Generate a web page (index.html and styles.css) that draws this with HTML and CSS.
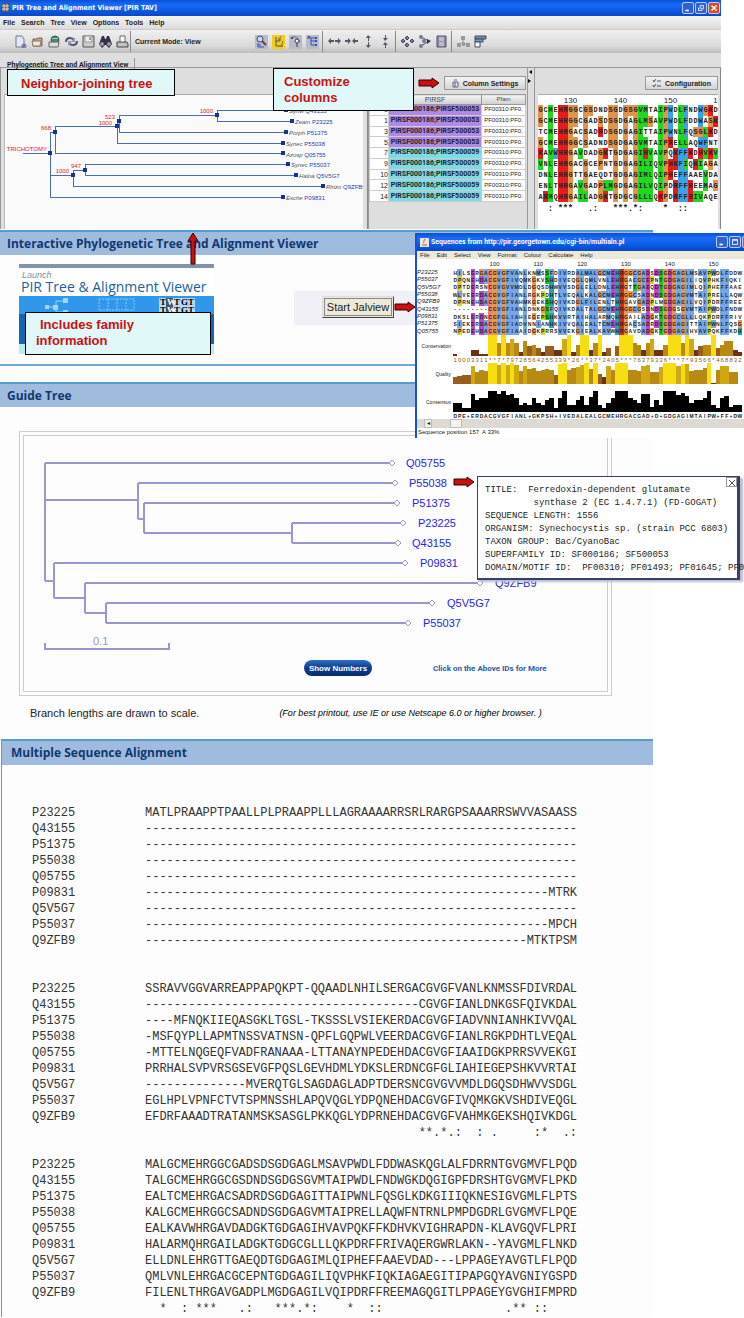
FILE: index.html
```html
<!DOCTYPE html>
<html lang="en">
<head>
<meta charset="utf-8">
<title>PIR Tree and Alignment Viewer</title>
<link rel="stylesheet" href="styles.css">
</head>
<body>
<main class="collage">

<section class="app">
  <header class="titlebar">
    <svg class="app-icon" viewBox="0 0 9 9"><rect width="9" height="9" fill="#555"/><path d="M1 3h7M1 6h7M3 1v7M6 1v7" stroke="#ddd"/></svg>
    <span class="title-text">PIR Tree and Alignment Viewer [PIR TAV]</span>
    <button class="win-btn" aria-label="Minimize"><svg viewBox="0 0 12 12"><path d="M3 9h4" stroke="#fff" stroke-width="2"/></svg></button>
    <button class="win-btn" aria-label="Restore"><svg viewBox="0 0 12 12"><path d="M3 6h4v3H3zM5 5V3h4v4H8" fill="none" stroke="#fff"/></svg></button>
    <button class="win-btn win-close" aria-label="Close"><svg viewBox="0 0 12 12"><path d="M3 3l6 6M9 3l-6 6" stroke="#fff" stroke-width="2"/></svg></button>
  </header>
  <nav class="menubar">
    <button>File</button><button>Search</button><button>Tree</button><button>View</button><button>Options</button><button>Tools</button><button>Help</button>
  </nav>
  <div class="toolbar">
    <div class="tools">
      <button aria-label="New"><svg viewBox="0 0 13 13"><path d="M2 1h6l2 3v8H2z" fill="#e4e6f4" stroke="#778"/><path d="M10 8v5M7 11h6M8 9l4 4M12 9l-4 4" stroke="#66699a"/></svg></button>
      <button aria-label="Open"><svg viewBox="0 0 13 13"><path d="M2 11V4h4l1-1h4v8z" fill="#c9a58a" stroke="#765"/><path d="M1 6h9l-1 5H2z" fill="#f1e6da" stroke="#876"/></svg></button>
      <button aria-label="Open from web"><svg viewBox="0 0 13 13"><circle cx="7" cy="5" r="4" fill="#3f8c62" stroke="#355"/><path d="M4 4c2-2 3 1 6-1" stroke="#bde" fill="none"/><path d="M1 7h10l-1 5H1z" fill="#ddd" stroke="#666"/></svg></button>
      <button aria-label="Refresh"><svg viewBox="0 0 13 13"><path d="M1 7c0-5 6-5 8-2M12 6c0 5-6 5-8 2" fill="none" stroke="#557" stroke-width="2"/><path d="M10 2v5H6zM3 11V6h4z" fill="#99b"/></svg></button>
      <button aria-label="Save"><svg viewBox="0 0 13 13"><path d="M1 1h11v11H1z" fill="#ccc" stroke="#555"/><path d="M3 1h7v6H3z" fill="#eee" stroke="#999"/><path d="M8 2v3" stroke="#555"/></svg></button>
      <button aria-label="Find"><svg viewBox="0 0 13 13"><path d="M3 1h2l1 3h1l1-3h2l3 8-3 4-3-3H6l-3 3-3-4z" fill="#334"/><circle cx="3" cy="9" r="2" fill="#99a"/><circle cx="10" cy="9" r="2" fill="#99a"/></svg></button>
      <button aria-label="Print"><svg viewBox="0 0 13 13"><path d="M4 7V1h5v6" fill="#fff" stroke="#667"/><path d="M1 7h10l1 2v3H1z" fill="#bbc" stroke="#445"/><path d="M3 10h6" stroke="#dd5"/></svg></button>
    </div>
    <span class="mode">Current Mode: View</span>
    <div class="tools tools-mode">
      <button aria-label="Zoom mode" class="on"><svg viewBox="0 0 13 13"><circle cx="5" cy="4" r="3" fill="#bdf" stroke="#447"/><path d="M7 6l4 4" stroke="#643" stroke-width="2"/><path d="M3 8v4h6M3 10h3" stroke="#35b" fill="none"/></svg></button>
      <button aria-label="Select mode" class="on active"><svg viewBox="0 0 13 13"><path d="M4 2v9h7M4 6h4M8 3v3" stroke="#456" fill="none"/><path d="M9 1l-3 4M11 6l-2 6" stroke="#a60"/></svg></button>
      <button aria-label="Swap mode" class="on"><svg viewBox="0 0 13 13"><path d="M2 4c2-4 7-2 9 3" stroke="#667" fill="none"/><circle cx="3" cy="3" r="1" fill="#336"/><circle cx="8" cy="6" r="2" fill="#fff" stroke="#336"/><path d="M8 8v4" stroke="#336"/></svg></button>
      <button aria-label="Tree mode" class="on"><svg viewBox="0 0 13 13"><path d="M1 3h4v3h6M5 6v4h6M5 3h5" stroke="#35b" fill="none"/><path d="M2 1h2v2H2zM9 2h2v2H9zM9 5h2v2H9zM9 9h2v2H9z" fill="#35b"/></svg></button>
    </div>
    <div class="tools tools-size">
      <button aria-label="Narrow"><svg viewBox="0 0 13 13"><path d="M0 6l3-3v2h3v2H3v2zM13 6l-3-3v2H7v2h3v2z" fill="#556"/></svg></button>
      <button aria-label="Widen"><svg viewBox="0 0 13 13"><path d="M6 6L3 3v2H0v2h3v2zM7 6l3-3v2h3v2h-3v2z" fill="#556"/></svg></button>
      <button aria-label="Taller"><svg viewBox="0 0 13 13"><path d="M6 0L4 3h2v3h1V3h2zM6 13l-2-3h2V7h1v3h2z" fill="#556"/></svg></button>
      <button aria-label="Shorter"><svg viewBox="0 0 13 13"><path d="M6 6L4 3h2V0h1v3h2zM6 7l-2 3h2v3h1v-3h2z" fill="#556"/></svg></button>
    </div>
    <div class="tools tools-view">
      <button aria-label="Fit"><svg viewBox="0 0 13 13"><path d="M6 1l2 2-2 2-2-2zM6 8l2 2-2 2-2-2zM2 4l2 2-2 2-2-2zM11 4l2 2-2 2-2-2z" fill="#779" stroke="#445"/></svg></button>
      <button aria-label="Collapse"><svg viewBox="0 0 13 13"><path d="M3 2l8 4-8 5" stroke="#556" fill="none"/><circle cx="3" cy="2" r="2" fill="#779"/><circle cx="3" cy="11" r="2" fill="#779"/><circle cx="6" cy="6" r="2" fill="#779"/><path d="M9 4l4 2-4 3z" fill="#334"/></svg></button>
      <button aria-label="Columns"><svg viewBox="0 0 13 13"><path d="M2 1h9v11H2z" fill="#99a" stroke="#557"/><path d="M4 3h5M4 5h5M4 8h5M4 10h5" stroke="#dde"/><path d="M3 1v11M10 1v11" stroke="#557" stroke-dasharray="1 1"/></svg></button>
    </div>
    <div class="tools tools-view">
      <button aria-label="Hierarchy"><svg viewBox="0 0 13 13"><path d="M6 3v4M2 10l4-3 5 3" stroke="#999" fill="none"/><path d="M4 1h4v4H4zM0 8h4v4H0zM9 8h4v4H9zM5 8h3v3H5z" fill="#999"/></svg></button>
      <button aria-label="Chart"><svg viewBox="0 0 13 13"><path d="M1 1h11v3H1z" fill="#88a" stroke="#446"/><path d="M1 4h8v3H1z" fill="#5ac" stroke="#446"/><path d="M1 7h5v5H1z" fill="#fff" stroke="#446"/></svg></button>
    </div>
  </div>
  <div class="tabs"><button>Phylogenetic Tree and Alignment View</button></div>
  <div class="panes">
    <div class="pane pane-tree">
      <div class="canvas">
      <svg class="nj" width="359" height="134" viewBox="5 95 359 134">
        <g class="nj-lines">
          <path d="M23 153H50M50 132V197M50 132H55M55 126V153M55 126H117M117 121V143M119 115V132M117 121H119M119 115H217M217 110V121M217 110H286M217 121H292M119 132H286M117 143H283M55 153H283M50 175H73M73 170V186M73 170H85M85 164V175M85 164H288M85 175H296M73 186H322M50 197H283"/>
        </g>
        <path class="nj-nodes" d="M48 151h4v4h-4zM53 130h4v4h-4zM115 124h4v4h-4zM117 119h4v4h-4zM215 113h4v4h-4zM284 108h4v4h-4zM290 119h4v4h-4zM284 130h4v4h-4zM281 141h4v4h-4zM281 151h4v4h-4zM71 173h4v4h-4zM83 168h4v4h-4zM286 162h4v4h-4zM294 173h4v4h-4zM321 184h4v4h-4zM281 195h4v4h-4z"/>
        <g class="nj-boot">
          <text x="51" y="130">668</text><text x="115" y="119">523</text><text x="112" y="125">1000</text><text x="213" y="113">1000</text><text x="81" y="168">947</text><text x="69" y="173">1000</text><text x="47" y="151">TRICHOTOMY</text>
        </g>
        <g class="nj-names">
          <text x="289" y="113"><tspan class="genus">Synw</tspan> Q43155</text>
          <text x="295" y="124"><tspan class="genus">Zeam</tspan> P23225</text>
          <text x="289" y="135"><tspan class="genus">Porph</tspan> P51375</text>
          <text x="286" y="146"><tspan class="genus">Synec</tspan> P55038</text>
          <text x="286" y="157"><tspan class="genus">Azosp</tspan> Q05755</text>
          <text x="291" y="167"><tspan class="genus">Synec</tspan> P55037</text>
          <text x="299" y="178"><tspan class="genus">Haloa</tspan> Q5V5G7</text>
          <text x="326" y="189"><tspan class="genus">Rhizo</tspan> Q9ZFB9</text>
          <text x="286" y="200"><tspan class="genus">Esche</tspan> P09831</text>
        </g>
      </svg>
      </div>
    </div>
    <div class="pane pane-table">
      <button class="swing"><svg width="7" height="9" viewBox="0 0 7 9"><path d="M1 3h5v5H1zM3 3v5M2 1h3" fill="#dde" stroke="#668"/></svg>Column Settings</button>
      <table class="fam">
        <thead><tr><th class="c-no"></th><th>PIRSF</th><th class="c-pf">Pfam</th></tr></thead>
        <tbody id="fam-rows"></tbody>
      </table>
    </div>
    <div class="splitter"><svg width="4" height="14" viewBox="0 0 4 14"><path d="M4 0v4L1 2zM0 9v4l3-2z"/></svg></div>
    <div class="pane pane-seq">
      <button class="swing"><svg width="9" height="9" viewBox="0 0 9 9"><path d="M1 1l1 2 2-3M1 6l1 2 2-3M5 2h4M5 7h4" fill="none" stroke="#555"/></svg>Configuration</button>
      <div class="canvas"><div class="seq-top" id="seq-top"></div></div>
    </div>
  </div>
</section>

<div class="page">
  <section class="sec sec-launch">
    <h2>Interactive Phylogenetic Tree and Alignment Viewer</h2>
    <div class="launch-row">
      <a class="banner" href="#viewer">
        <span class="b-small">Launch</span>
        <span class="b-big">PIR Tree &amp; Alignment Viewer</span>
        <span class="b-art">
          <svg width="195" height="18" viewBox="0 0 195 18">
            <path d="M28 11h6M37 11V5h8M37 11v5h8" fill="none" stroke="#9cd0f8"/><path d="M26 9h4v4h-4zM44 2h5v5h-5zM34 9h5v5h-5zM44 14h5v4h-5z" fill="#a8d4f8"/>
            <path d="M80 3h35v11H80zM89 3v11M98 3v11M107 3v11" fill="none" stroke="#8cc6f6" stroke-dasharray="2 1"/>
            <path d="M140 2h36v16h-36z" fill="#b8d8f0"/><path d="M147 2h7v16h-7z" fill="#456"/>
            <g class="b-code"><text x="141" y="9">T</text><text x="148" y="9" fill="#fff">W</text><text x="155" y="9">T</text><text x="162" y="9">G</text><text x="169" y="9">T</text><text x="141" y="17">T</text><text x="148" y="17" fill="#fff">W</text><text x="155" y="17">T</text><text x="162" y="17">G</text><text x="169" y="17">T</text></g>
          </svg>
        </span>
        <span class="b-dark"></span>
        <span class="b-foot"></span>
      </a>
      <div class="jal-strip"><button class="jal-btn">Start Jalview</button></div>
    </div>
  </section>

  <section class="sec sec-guide">
    <h2>Guide Tree</h2>
    <div class="frame"><div class="frame-in">
      <svg class="guide" width="584" height="225" viewBox="24 435 584 225">
        <path class="g-lines" d="M45 462V580M45 462H389M45 499H138M138 482V518M138 482H392M138 518H144M144 502V532M144 502H394M144 532H292M292 522V542M292 522H401M292 542H395M45 580H54M54 562V597M54 562H403M54 597H85M85 582V612M85 582H478M85 612H106M106 602V622M106 602H430M106 622H406M45 642V648M169 642V648M44 648H170"/>
        <path class="g-tips" d="M389 462l3-3 3 3-3 3zM392 482l3-3 3 3-3 3zM394 502l3-3 3 3-3 3zM400 522l3-3 3 3-3 3zM395 542l3-3 3 3-3 3zM402 562l3-3 3 3-3 3zM477 582l3-3 3 3-3 3zM429 602l3-3 3 3-3 3zM405 622l3-3 3 3-3 3z"/>
        <text class="g-scale" x="93" y="644">0.1</text>
        <g class="g-ids">
          <a href="#Q05755"><text x="406" y="466">Q05755</text></a>
          <a href="#P55038"><text x="409" y="486">P55038</text></a>
          <a href="#P51375"><text x="412" y="506">P51375</text></a>
          <a href="#P23225"><text x="418" y="526">P23225</text></a>
          <a href="#Q43155"><text x="412" y="546">Q43155</text></a>
          <a href="#P09831"><text x="420" y="566">P09831</text></a>
          <a href="#Q9ZFB9"><text x="495" y="586">Q9ZFB9</text></a>
          <a href="#Q5V5G7"><text x="447" y="606">Q5V5G7</text></a>
          <a href="#P55037"><text x="423" y="626">P55037</text></a>
        </g>
      </svg>
      <div class="guide-foot"><button class="pill">Show Numbers</button><span>Click on the Above IDs for More</span></div>
    </div></div>
    <p class="note"><span>Branch lengths are drawn to scale.</span><em>(For best printout, use IE or use Netscape 6.0 or higher browser. )</em></p>
  </section>

  <section class="sec sec-msa">
    <h2>Multiple Sequence Alignment</h2>
    <div id="msa"></div>
  </section>
</div>

<section class="jalview">
  <header class="titlebar">
    <svg class="app-icon" viewBox="0 0 9 9"><rect width="9" height="9" fill="#e8e4e0"/><path d="M2 7h5M3 5c2-1 0-2 2-4" fill="none" stroke="#b54"/></svg>
    <span class="title-text">Sequences from http://pir.georgetown.edu/cgi-bin/multialn.pl</span>
    <button class="win-btn" aria-label="Minimize"><svg viewBox="0 0 12 12"><path d="M3 9h4" stroke="#fff" stroke-width="2"/></svg></button>
    <button class="win-btn" aria-label="Maximize"><svg viewBox="0 0 12 12"><path d="M3 3h6v6H3zM3 4h6" fill="none" stroke="#fff"/></svg></button>
    <button class="win-btn win-close" aria-label="Close"><svg viewBox="0 0 12 12"><path d="M3 3l6 6M9 3l-6 6" stroke="#fff" stroke-width="2"/></svg></button>
  </header>
  <nav class="menubar">
    <button>File</button><button>Edit</button><button>Select</button><button>View</button><button>Format</button><button>Colour</button><button>Calculate</button><button>Help</button>
  </nav>
  <div class="jal-grid" id="jal-grid"></div>
  <div class="scroll"><button aria-label="Scroll left">◂</button><i></i></div>
  <footer class="status">Sequence position 157&nbsp; A 33%</footer>
</section>

<aside class="popup">
  <button aria-label="Close"><svg width="10" height="10" viewBox="0 0 10 10"><path d="M2 2l6 6M8 2l-6 6" stroke="#555"/></svg></button>
  <pre>TITLE:  Ferredoxin-dependent glutamate
         synthase 2 (EC 1.4.7.1) (FD-GOGAT)
SEQUENCE LENGTH: 1556
ORGANISM: Synechocystis sp. (strain PCC 6803)
TAXON GROUP: Bac/CyanoBac
SUPERFAMILY ID: SF000186; SF500053
DOMAIN/MOTIF ID:  PF00310; PF01493; PF01645; PF04898</pre>
</aside>

<div class="callout callout-nj">Neighbor-joining tree</div>
<div class="callout callout-cols">Customize<br>columns</div>
<div class="callout callout-fam">Includes family information</div>

<svg class="arrow arrow-cols" width="22" height="12" viewBox="0 0 22 12"><path d="M1 3h13V1l7 5-7 5V9H1z"/></svg>
<svg class="arrow arrow-jal" width="22" height="12" viewBox="0 0 22 12"><path d="M1 3h13V1l7 5-7 5V9H1z"/></svg>
<svg class="arrow arrow-pop" width="22" height="12" viewBox="0 0 22 12"><path d="M1 3h13V1l7 5-7 5V9H1z"/></svg>
<svg class="arrow arrow-up" width="12" height="33" viewBox="0 0 12 33"><path d="M4 32V9H1l5-8 5 8H8v23z"/></svg>
</main>
<script src="render.js"></script>
</body>
</html>
```

FILE: styles.css
```css
* { box-sizing: border-box; }
body { margin: 0; background: #fff; font-family: "Liberation Sans", Arial, sans-serif; color: #222; }
button { font: inherit; color: inherit; margin: 0; padding: 0; border: 0; background: none; white-space: nowrap; }
svg { display: block; flex: none; }
.collage { position: relative; overflow: hidden; }

/* application window */
.app { margin-right: 23px; height: 229px; display: flex; flex-direction: column; background: #dedede; }
.titlebar { display: flex; align-items: center; gap: 1px; height: 16px; padding: 0 1px; background: linear-gradient(#0a50d8, #1a6cf8 30%, #0a58e0 70%, #0848c8); color: #fff; font-family: "DejaVu Sans Condensed", sans-serif; font-size: 7px; font-weight: bold; }
.app-icon { width: 9px; height: 9px; }
.title-text { flex: 1; padding-left: 1px; white-space: nowrap; }
.win-btn { width: 12px; height: 12px; border: 1px solid #b8ccf4; border-radius: 2px; background: #2f62d8; }
.win-btn svg { width: 10px; height: 10px; }
.win-close { background: #dc4a24; }
.menubar { display: flex; align-items: center; font-size: 7px; }
.app .menubar { height: 14px; gap: 6px; padding-left: 3px; font-weight: bold; background: linear-gradient(#f4f4f4, #dcdcdc); }
.toolbar { display: flex; align-items: center; height: 24px; padding-left: 14px; background: linear-gradient(#f0f0f0, #dadada 70%, #bcbcbc); border-top: 1px solid #ccc; }
.tools { display: flex; gap: 4px; height: 21px; align-items: center; }
.tools button { width: 13px; height: 14px; }
.tools svg { width: 13px; height: 13px; }
.tools .on { background: #b9bcc4; }
.tools .active { background: #f4cc20; }
.mode { flex: 0 0 125px; margin-left: 1px; padding-left: 4px; height: 21px; line-height: 21px; border-left: 1px solid #888; font-size: 7px; font-weight: bold; }
.tools-size, .tools-view { margin-left: 3px; padding-left: 5px; border-left: 1px solid #888; }
.tabs { height: 15px; border-bottom: 1px solid #999; }
.tabs button { height: 14px; padding: 0 6px 0 7px; font-family: Roboto, sans-serif; font-size: 7px; font-weight: bold; border-right: 1px solid #999; }
.panes { flex: 1; display: grid; grid-template-columns: 368fr 159fr 7px 187fr; }
.pane { display: flex; flex-direction: column; min-width: 0; overflow: hidden; border-left: 1px solid #999; }
.canvas { flex: 1; background: #fbfbfb; overflow: hidden; border-top: 1px solid #aaa; border-left: 1px solid #bbb; }
.pane-tree { padding: 26px 4px 0 3px; border-right: 1px solid #888; }
.nj-lines { fill: none; stroke: #4a6cb8; stroke-width: 1; shape-rendering: crispEdges; }
.nj-nodes { fill: #12349a; }
.nj text { font-size: 6px; }
.nj-boot { fill: #e02020; text-anchor: end; }
.nj-names { fill: #1c3ca8; }
.genus { fill: #555; font-style: italic; }
.swing { display: flex; align-items: center; justify-content: center; gap: 4px; height: 14px; align-self: flex-end; border: 1px solid #999; background: linear-gradient(#f4f4f4, #d4d4d4); font-size: 7px; font-weight: bold; }
.pane-table { padding-top: 8px; padding-right: 1px; }
.pane-table .swing { width: 82px; margin-bottom: 4px; }
.fam { width: 100%; height: 108px; border-collapse: collapse; table-layout: fixed; background: #fff; font-size: 7px; line-height: 9px; }
.fam th, .fam td { padding: 0; border: 1px solid #ccc; white-space: nowrap; overflow: hidden; text-align: center; }
.fam th { background: linear-gradient(#f4f4f4, #cfcfcf); border-color: #999; font-weight: normal; color: #444; }
.fam .c-no { width: 19px; text-align: right; }
.fam .c-pf { width: 44px; font-size: 6px; }
.fam .a { background: #b088e6; font-family: Roboto, sans-serif; font-weight: bold; }
.fam .b { background: #7edbe6; font-family: Roboto, sans-serif; font-weight: bold; }
.splitter { padding-top: 2px; border-left: 1px solid #999; }
.pane-seq { padding: 8px 2px 0 3px; border-right: 1px solid #888; }
.pane-seq .swing { width: 73px; margin-bottom: 4px; }
.pane-seq .canvas { background: #fff; border-left: 0; }
.seq-top { font-family: "Liberation Mono", monospace; font-size: 7px; font-weight: bold; }
.cells { display: grid; overflow: visible; }
.cells > * { display: flex; align-items: center; justify-content: center; min-width: 0; white-space: pre; }
.seq-top .cells { grid-template-columns: repeat(36, minmax(0, 1fr)); }
.seq-top .ruler { height: 10px; font-family: "Liberation Sans", sans-serif; font-size: 8px; font-weight: normal; }
.seq-top .rows { height: 97px; grid-auto-rows: minmax(0, 1fr); }
.seq-top .cons { height: 13px; font-size: 9px; }
.t-green { background: #1fd81f; }
.t-red { background: #e41c1c; }
.t-orange { background: #e2944a; }
.t-blue { background: #35a4ea; }

/* result page */
.page { margin-right: 91px; padding-top: 1px; background: #fdfdfd; }
.sec h2 { margin: 0; padding-left: 7px; height: 25px; line-height: 23px; border-top: 2px solid #559dcd; background: #9fbbde; color: #12386f; font-family: "Open Sans", sans-serif; font-size: 12px; font-weight: bold; white-space: nowrap; }
.launch-row { display: flex; align-items: flex-start; justify-content: space-between; height: 111px; padding: 9px 169px 0 19px; border-bottom: 2px solid #6ea9d2; }
.banner { display: flex; flex-direction: column; width: 195px; height: 90px; border-top: 4px solid #8494a8; background: #fff; color: #1c609e; text-decoration: none; white-space: nowrap; }
.b-small { padding: 1px 0 0 3px; height: 11px; font-size: 9px; line-height: 12px; font-style: italic; color: #8090a4; }
.b-big { padding-left: 2px; height: 17px; line-height: 15px; font-family: "Open Sans", sans-serif; font-size: 14px; }
.b-art { height: 18px; background: #3098ec; }
.b-code { font-family: "Liberation Serif", serif; font-size: 9px; font-weight: bold; }
.b-dark { flex: 1; background: #1266b4; }
.b-foot { height: 10px; background: #b4ecf8; }
.jal-strip { width: 190px; height: 34px; margin-top: 27px; padding: 5px 0 0 28px; background: #f0f0f6; }
.jal-btn { width: 72px; height: 22px; border: 1px solid #555; border-color: #ddd #444 #444 #ddd; outline: 1px solid #888; outline-offset: -3px; background: #ece9d8; font-size: 11px; }
.sec-guide { margin-top: 16px; }
.frame { margin: 24px 41px 0 19px; padding: 3px; border: 1px solid #ccc; }
.frame-in { height: 257px; border: 1px solid #ccc; overflow: hidden; }
.g-lines { fill: none; stroke: #9898d0; stroke-width: 2; shape-rendering: crispEdges; }
.g-tips { fill: #fff; stroke: #9898d0; }
.g-scale { fill: #9494cc; font-size: 11px; }
.g-ids { fill: #2424e4; font-size: 11px; }
.guide-foot { display: flex; align-items: center; gap: 61px; height: 14px; padding-left: 280px; }
.pill { width: 68px; height: 16px; border-radius: 8px; background: linear-gradient(#3070c0, #0c3c94 50%, #082c70); color: #fff; font-size: 8px; font-weight: bold; }
.guide-foot span { color: #2a5cac; font-size: 8px; font-weight: bold; white-space: nowrap; font-family: Roboto, sans-serif; }
.note { display: flex; align-items: center; gap: 80px; height: 43px; margin: 0; padding: 0 0 10px 30px; font-size: 11px; white-space: nowrap; color: #222; }
.note em { font-size: 9px; color: #000; }
.sec-msa { margin-left: 1px; border-left: 1px solid #559dcd; }
.sec-msa h2 { height: 26px; padding-left: 9px; }
#msa { padding-top: 40px; }
.block { margin-bottom: 16px; border-collapse: collapse; font-family: "Liberation Mono", monospace; font-size: 12px; line-height: 16px; color: #333; }
.block:last-child { margin-bottom: 0; }
.block th, .block td { padding: 0; height: 16px; font-weight: normal; text-align: left; white-space: pre; }
.block th { width: 143px; padding-left: 30px; }

/* Jalview window */
.jalview { position: absolute; left: 415px; right: -11px; top: 233px; height: 205px; display: flex; flex-direction: column; border-left: 2px solid #1450dc; background: #fff; }
.jalview .titlebar { height: 18px; padding: 0 1px 0 3px; font-family: Roboto, sans-serif; }
.jalview .menubar { height: 8px; gap: 7px; padding-left: 3px; background: #ece9d8; font-size: 6px; }
.jal-grid { flex: 1; display: grid; grid-template-columns: 36px 1fr; grid-template-rows: 10px 66px 21px 7px 21px 7px 21px 7px; padding-right: 13px; font-size: 5px; font-weight: bold; }
.jal-grid .cells { grid-template-columns: repeat(66, minmax(0, 1fr)); }
.jal-grid .rows { grid-auto-rows: minmax(0, 1fr); }
.jal-grid .ruler { font-size: 6px; font-weight: normal; }
.jal-grid svg { width: 100%; height: 100%; }
.jal-grid .digits { font-size: 6px; color: #8a5a20; font-weight: normal; }
.ids { display: grid; grid-auto-rows: minmax(0, 1fr); align-items: center; font-size: 6px; font-style: italic; font-weight: normal; line-height: 7px; }
.row-name { align-self: center; justify-self: end; padding-right: 2px; font-size: 5px; font-weight: normal; }
.gap-row { grid-column: 1 / -1; }
.j-blue { background: #74a6e8; }
.j-mag { background: #c048c8; }
.j-orange { background: #e89850; }
.j-pink { background: #e88080; }
.j-red { background: #e02818; }
.j-green { background: #22c822; }
.j-cyan { background: #1ca8a8; }
.j-yellow { background: #d8d820; }
.scroll { display: flex; gap: 18px; height: 9px; padding-left: 7px; background: #dcdad2; }
.scroll button { width: 8px; height: 9px; border: 1px solid #bbb; background: #f0eee6; font-size: 6px; line-height: 7px; }
.scroll i { width: 12px; background: #f4f2ea; border: 1px solid #bbb; }
.status { height: 10px; padding-left: 1px; font-size: 6px; line-height: 9px; }

/* family details popup */
.popup { position: absolute; left: 477px; top: 476px; width: 263px; height: 104px; padding: 7px 0 0 7px; background: #fff; border: 1px solid #34406e; border-width: 1px 3px 2px 1px; box-shadow: 3px 2px 2px #bbc; }
.popup pre { margin: 0; font-family: "Liberation Mono", monospace; font-size: 9px; line-height: 13px; color: #222; }
.popup button { position: absolute; right: 0; top: 0; width: 11px; height: 10px; border: 1px solid #999; }

/* annotations */
.callout { position: absolute; border: 1px solid #000; background: #e0f8f8; color: #cc1010; font-size: 13px; font-weight: bold; line-height: 16px; }
.callout-nj { left: 7px; top: 69px; width: 168px; height: 27px; padding: 6px 0 0 13px; }
.callout-cols { left: 273px; top: 68px; width: 141px; height: 43px; padding: 5px 0 0 10px; }
.callout-fam { left: 25px; top: 312px; width: 186px; height: 43px; padding: 4px 40px 0 10px; text-indent: 4px; }
.arrow { position: absolute; fill: #cc1010; stroke: #300; }
.arrow-cols { left: 418px; top: 77px; }
.arrow-jal { left: 394px; top: 301px; }
.arrow-pop { left: 453px; top: 476px; }
.arrow-up { left: 187px; top: 232px; }
```

FILE: render.js
```javascript
const IDS = ['P23225', 'Q43155', 'P51375', 'P55038', 'Q05755', 'P09831', 'Q5V5G7', 'P55037', 'Q9ZFB9'];
const dash = n => '-'.repeat(n);
const BLOCKS = [
  {
    seqs: [
      'MATLPRAAPPTPAALLPLPRAAPPLLLAGRAAAARRSRLRARGPSAAARRSWVVASAASS',
      dash(60), dash(60), dash(60), dash(60), dash(56) + 'MTRK', dash(60), dash(56) + 'MPCH', dash(53) + 'MTKTPSM'
    ],
    cons: ' '
  },
  {
    seqs: [
      'SSRAVVGGVARREAPPAPQKPT-QQAADLNHILSERGACGVGFVANLKNMSSFDIVRDAL',
      dash(38) + 'CGVGFIANLDNKGSFQIVKDAL',
      '----MFNQKIIEQASGKLTGSL-TKSSSLVSIEKERDACGVGFIADVNNIANHKIVVQAL',
      '-MSFQYPLLAPMTNSSVATNSN-QPFLGQPWLVEERDACGVGFIANLRGKPDHTLVEQAL',
      '-MTTELNQGEQFVADFRANAAA-LTTANAYNPEDEHDACGVGFIAAIDGKPRRSVVEKGI',
      'PRRHALSVPVRSGSEVGFPQSLGEVHDMLYDKSLERDNCGFGLIAHIEGEPSHKVVRTAI',
      dash(14) + 'MVERQTGLSAGDAGLADPTDERSNCGVGVVMDLDGQSDHWVVSDGL',
      'EGLHPLVPNFCTVTSPMNSSHLAPQVQGLYDPQNEHDACGVGFIVQMKGKVSHDIVEQGL',
      'EFDRFAAADTRATANMSKSASGLPKKQGLYDPRNEHDACGVGFVAHMKGEKSHQIVKDGL'
    ],
    cons: ' '.repeat(38) + '**.*.:  : .     :*  .:'
  },
  {
    seqs: [
      'MALGCMEHRGGCGADSDSGDGAGLMSAVPWDLFDDWASKQGLALFDRRNTGVGMVFLPQD',
      'TALGCMEHRGGCGSDNDSGDGSGVMTAIPWDLFNDWGKDQGIGPFDRSHTGVGMVFLPKD',
      'EALTCMEHRGACSADRDSGDGAGITTAIPWNLFQSGLKDKGIIIQKNESIGVGMLFLPTS',
      'KALGCMEHRGGCSADNDSGDGAGVMTAIPRELLAQWFNTRNLPMPDGDRLGVGMVFLPQE',
      'EALKAVWHRGAVDADGKTGDGAGIHVAVPQKFFKDHVKVIGHRAPDN-KLAVGQVFLPRI',
      'HALARMQHRGAILADGKTGDGCGLLLQKPDRFFRIVAQERGWRLAKN--YAVGMLFLNKD',
      'ELLDNLEHRGTTGAEQDTGDGAGIMLQIPHEFFAAEVDAD---LPPAGEYAVGTLFLPQD',
      'QMLVNLEHRGACGCEPNTGDGAGILIQVPHKFIQKIAGAEGITIPAPGQYAVGNIYGSPD',
      'FILENLTHRGAVGADPLMGDGAGILVQIPDRFFREEMAGQGITLPPAGEYGVGHIFMPRD'
    ],
    cons: '  *  : ***   .:   ***.*:    *  ::' + ' '.repeat(17) + '.** ::'
  }
];
const seq = (b, id) => BLOCKS[b].seqs[IDS.indexOf(id)];
const cell = (ch, cls) => `<span${cls ? ` class="${cls}"` : ''}>${ch}</span>`;

/* plain alignment blocks */
document.getElementById('msa').innerHTML = BLOCKS.map(b =>
  '<table class="block">' + b.seqs.map((s, i) => `<tr><th>${IDS[i]}</th><td>${s}</td></tr>`).join('') +
  `<tr><th></th><td>${b.cons}</td></tr></table>`).join('');

/* family table */
document.getElementById('fam-rows').innerHTML = [0, 1, 3, 5, 7, 9, 10, 12, 14].map((n, i) =>
  `<tr><td class="c-no">${n}</td><td class="${i < 4 ? 'a' : 'b'}">PIRSF000186;PIRSF5000${i < 4 ? 53 : 59}</td><td class="c-pf">PF00310:PF0.</td></tr>`).join('');

/* coloured alignment next to the table */
const topClass = ch => 'MVIL'.includes(ch) ? 't-green' : 'HRK'.includes(ch) ? 't-red' : 'GSP'.includes(ch) ? 't-orange' : 'FW'.includes(ch) ? 't-blue' : '';
const topIds = ['Q43155', 'P23225', 'P51375', 'P55038', 'Q05755', 'P55037', 'Q5V5G7', 'Q9ZFB9', 'P09831'];
document.getElementById('seq-top').innerHTML =
  '<div class="cells ruler">' + [[130, 6], [140, 16], [150, 26]].map(([n, k]) => `<span style="grid-column:${k - 1}/span 5">${n}</span>`).join('') + '<span style="grid-column:36">1</span></div>' +
  '<div class="cells rows">' + topIds.map(id => [...seq(2, id).slice(3, 39)].map(c => cell(c, topClass(c))).join('')).join('') + '</div>' +
  '<div class="cells cons">' + [...BLOCKS[2].cons.slice(3, 39)].map(c => cell(c)).join('') + '</div>';

/* Jalview alignment */
const BLUE = new Set([1, 7, 10, 12, 13, 14, 16, 19, 22, 24, 25, 28, 29, 30, 31, 32, 34, 35, 43, 51, 53, 54, 56, 57, 59, 61, 62]);
const MAG = new Set([4, 6, 36, 44, 46, 49]);
function jalClass(c, k) {
  if (c === 'G') return 'j-orange';
  if (c === 'P') return 'j-yellow';
  if (c === 'C') return k === 8 ? 'j-pink' : 'j-blue';
  if (k === 38) return 'j-red';
  if ('AILMFWV'.includes(c) && BLUE.has(k)) return 'j-blue';
  if ('DE'.includes(c) && MAG.has(k)) return 'j-mag';
  if (c === 'H' && (k === 22 || k === 37 || k === 65)) return 'j-cyan';
  if ('ST'.includes(c) && (k === 21 || k === 47 || k === 41)) return 'j-green';
  return '';
}
const jalIds = ['P23225', 'P55037', 'Q5V5G7', 'P55038', 'Q9ZFB9', 'Q43155', 'P09831', 'P51375', 'Q05755'];
const SCORE = '10003311**7*79728564255339*26**37*2405***76379336***7*93566*468832';
const cons = [...SCORE].map(c => c === '*' ? 62 : Number(c) * 62 / 11);
const quality = [22,25,27,28,52,36,40,38,62,62,57,62,55,62,55,38,52,44,48,38,40,45,42,28,60,62,42,46,50,56,62,44,62,30,20,52,40,62,62,62,40,40,38,52,55,34,34,50,62,62,62,52,60,58,38,40,42,48,62,3,42,52,54,36,34,1];
const depth = [26,26,12,12,54,36,40,40,62,62,54,62,50,52,40,20,26,20,40,26,20,36,40,12,40,62,22,20,36,48,20,44,62,20,12,28,40,62,62,62,40,36,26,54,52,14,34,22,62,62,62,50,56,48,26,34,36,40,62,20,12,40,48,14,20,20];
const ramp = v => v > 58 ? '#f6de10' : v > 48 ? '#d0a814' : v > 32 ? '#b88a14' : v > 20 ? '#96601c' : '#6c3014';
const bars = (vals, color) => `<svg viewBox="0 0 66 62" preserveAspectRatio="none" shape-rendering="crispEdges">${vals.map((v, i) => `<rect x="${i}" y="${62 - v}" width="1" height="${v}" fill="${color || ramp(v)}"/>`).join('')}</svg>`;
const line = (s, cls) => `<div class="cells ${cls}">${[...s].map(c => cell(c)).join('')}</div>`;
document.getElementById('jal-grid').innerHTML =
  '<span></span><div class="cells ruler">' + [100, 110, 120, 130, 140, 150].map((n, i) => `<span style="grid-column:${i * 10 + 7}/span 7">${n}</span>`).join('') + '</div>' +
  '<div class="ids">' + jalIds.map(id => `<span>${id}</span>`).join('') + '</div>' +
  '<div class="cells rows">' + jalIds.map(id => [...(seq(1, id).slice(30) + seq(2, id).slice(0, 36))].map((c, k) => cell(c, jalClass(c, k))).join('')).join('') + '</div>' +
  '<span class="row-name">Conservation</span>' + bars(cons) +
  '<span></span>' + line(SCORE, 'digits') +
  '<span class="row-name">Quality</span>' + bars(quality) +
  '<span class="gap-row"></span>' +
  '<span class="row-name">Consensus</span>' + bars(depth, '#000') +
  '<span></span>' + line('DPE+ERDACGVGFIANL+GKPSH+IVEDALEALGCMEHRGACGAD+D+GDGAGIMTAIPW+FF+DW', 'consensus');
```
